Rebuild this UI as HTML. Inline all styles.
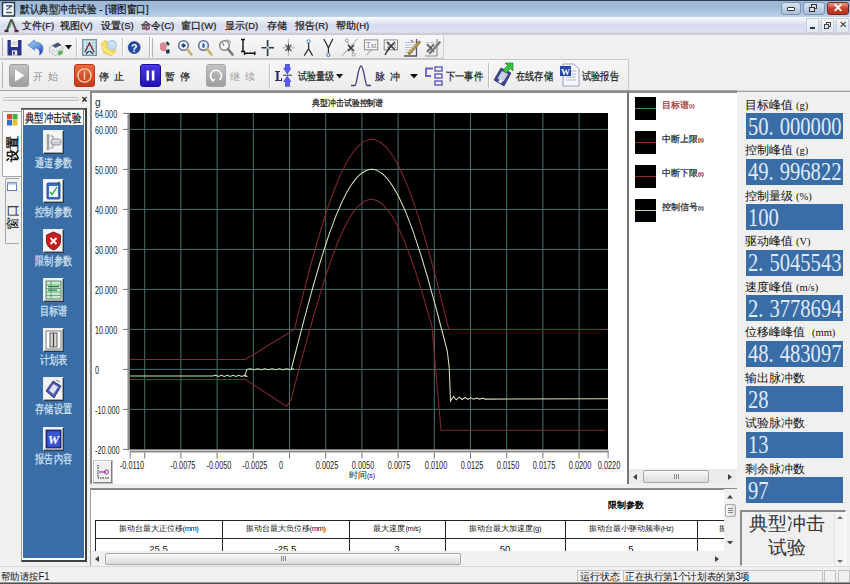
<!DOCTYPE html><html><head><meta charset="utf-8"><style>
*{margin:0;padding:0;box-sizing:border-box}
html,body{width:850px;height:584px;overflow:hidden;background:#f0f0f0;font-family:"Liberation Sans",sans-serif;color:#000}
.a{position:absolute}
.t{position:absolute;white-space:nowrap;line-height:1}
.b{-webkit-text-stroke:0.22px currentColor}
</style></head><body><div class="a" style="left:0;top:0;width:850px;height:17px;background:linear-gradient(#2c3e55 0,#2c3e55 1px,#a3b9d1 1px,#9cb8d8 6px,#b9d0e7 16px)"></div>
<svg class="a" style="left:1px;top:1px;" width="15" height="16" viewBox="0 0 15 16"><rect x="1.5" y="1.5" width="12" height="13.5" fill="#f8fcfc" stroke="#2a3a50" stroke-width="1.5"/><path d="M5,4.8 H11 M11,4.8 L5.5,8.8" stroke="#3a5a98" stroke-width="1.4" fill="none"/><path d="M8.5,8.3 H11" stroke="#d8c060" stroke-width="1.1"/><path d="M5,11.5 H11" stroke="#3a5a58" stroke-width="1.4"/></svg>
<div class="t b" style="left:20px;top:3.5px;font-size:11px;color:#101010;transform:scaleX(0.87);transform-origin:0 0">默认典型冲击试验 - [谱图窗口]</div>
<div class="a" style="left:781px;top:2px;width:20px;height:13px;border:1px solid #7d93b0;border-radius:3px;background:linear-gradient(#d6e2f0,#aac0da)"></div>
<div class="a" style="left:787px;top:7px;width:8px;height:4px;border:1px solid #333;border-radius:1px;background:#fff"></div>
<div class="a" style="left:803px;top:2px;width:22px;height:13px;border:1px solid #7d93b0;border-radius:3px;background:linear-gradient(#d6e2f0,#aac0da)"></div>
<div class="a" style="left:811px;top:4px;width:6px;height:5px;border:1px solid #333;background:#ddd"></div><div class="a" style="left:809px;top:7px;width:6px;height:5px;border:1px solid #333;background:#ddd"></div>
<div class="a" style="left:827px;top:2px;width:22px;height:13px;border:1px solid #6b2a22;border-radius:3px;background:linear-gradient(#e8a090,#c8402c 50%,#b8321e)"></div>
<div class="t" style="left:833px;top:2px;font-size:12px;font-weight:bold;color:#fff">✕</div>
<div class="a" style="left:0;top:17px;width:850px;height:18px;background:linear-gradient(#f8fcff 0,#e6ecf5 4px,#d8dcef 8px,#dde0f3 15px,#d0d3dc 16px,#c6c6c6 18px)"></div>
<svg class="a" style="left:3px;top:17px;" width="16" height="16" viewBox="0 0 16 16"><path d="M8.5,2.5 C7,5.5 5.5,9.5 4,13.3" stroke="#4a524a" stroke-width="2.2" fill="none"/><path d="M8.5,2.5 C10,5.5 11.5,9.5 13,13.3" stroke="#5a5454" stroke-width="2" fill="none"/><path d="M8,5.5 L6.5,10.5" stroke="#58b058" stroke-width="1.3"/><path d="M1.5,14 H5.5" stroke="#3a2a2a" stroke-width="2.2"/><path d="M11.5,14 H15.5" stroke="#6a1e30" stroke-width="2.4"/></svg>
<div class="t b" style="left:22px;top:21px;font-size:9.5px;color:#1a1a1a">文件(F)</div>
<div class="t b" style="left:60px;top:21px;font-size:9.5px;color:#1a1a1a">视图(V)</div>
<div class="t b" style="left:101px;top:21px;font-size:9.5px;color:#1a1a1a">设置(S)</div>
<div class="t b" style="left:141px;top:21px;font-size:9.5px;color:#1a1a1a">命令(C)</div>
<div class="t b" style="left:181px;top:21px;font-size:9.5px;color:#1a1a1a">窗口(W)</div>
<div class="t b" style="left:225px;top:21px;font-size:9.5px;color:#1a1a1a">显示(D)</div>
<div class="t b" style="left:267px;top:21px;font-size:9.5px;color:#1a1a1a">存储</div>
<div class="t b" style="left:295px;top:21px;font-size:9.5px;color:#1a1a1a">报告(R)</div>
<div class="t b" style="left:336px;top:21px;font-size:9.5px;color:#1a1a1a">帮助(H)</div>
<div class="a" style="left:806px;top:18px;width:13px;height:15px;border:1px solid #c8cdd8;background:linear-gradient(#f4f7fb,#dde6f2)"></div>
<div class="a" style="left:821px;top:18px;width:13px;height:15px;border:1px solid #c8cdd8;background:linear-gradient(#f4f7fb,#dde6f2)"></div>
<div class="a" style="left:836px;top:18px;width:13px;height:15px;border:1px solid #c8cdd8;background:linear-gradient(#f4f7fb,#dde6f2)"></div>
<div class="a" style="left:810px;top:27px;width:5px;height:2px;background:#333"></div>
<div class="a" style="left:826px;top:22px;width:5px;height:5px;border:1px solid #444"></div><div class="a" style="left:824px;top:24px;width:5px;height:5px;border:1px solid #444;background:#e8eef6"></div>
<div class="t" style="left:839px;top:20px;font-size:10px;color:#333">✕</div>
<div class="a" style="left:0;top:35px;width:850px;height:24px;background:#f0f0f0"></div>
<div class="a" style="left:0;top:35px;width:444px;height:24px;background:linear-gradient(#f8f8f8,#ececec);border-bottom:1px solid #c8c8c8;border-right:1px solid #d0d0d0"></div>
<div class="a" style="left:2px;top:38px;width:1px;height:18px;background:#b0b0b0"></div>
<div class="a" style="left:0;top:59px;width:629px;height:1px;background:#c8c8c8"></div>
<div class="a" style="left:0;top:60px;width:629px;height:31px;background:linear-gradient(#f6f6f6,#ececec);border-right:1px solid #c8c8c8"></div>
<div class="a" style="left:2px;top:62px;width:1px;height:26px;background:#b0b0b0"></div>
<div class="a" style="left:0;top:90px;width:737px;height:1px;background:#a0a0a0"></div><div class="a" style="left:737px;top:90px;width:113px;height:1px;background:#d4d4d4"></div>
<svg class="a" style="left:7px;top:39px;" width="15" height="17" viewBox="0 0 15 17"><path d="M0.5,1 H14.5 V16.5 H0.5 Z" fill="#2c3488"/><rect x="3.8" y="1" width="7.2" height="7" fill="#f6f6f6"/><rect x="4.5" y="2.8" width="5.8" height="0.9" fill="#b8b8b8"/><rect x="4.5" y="4.8" width="5.8" height="0.9" fill="#b8b8b8"/><rect x="5" y="11.4" width="5.2" height="5.1" fill="#f0f0f6"/><rect x="6" y="12.6" width="1.8" height="3" fill="#2c3488"/></svg>
<svg class="a" style="left:27px;top:39px;" width="17" height="17" viewBox="0 0 17 17"><defs><linearGradient id="ug" x1="0" y1="0" x2="0.6" y2="1"><stop offset="0" stop-color="#a8d0f4"/><stop offset="0.55" stop-color="#6aa0e0"/><stop offset="1" stop-color="#2848c0"/></linearGradient></defs><path d="M0.8,6 L7.5,0.8 L7.5,3 C12.5,2.6 16.3,5.5 16,10 C15.8,13 14,15.5 12.5,16.3 C13.2,13.5 12.8,9 7.5,9 L7.5,11.2 Z" fill="url(#ug)" stroke="#4a70b8" stroke-width="0.6"/></svg>
<svg class="a" style="left:48px;top:39px;" width="16" height="18" viewBox="0 0 16 18"><path d="M1.5,8 L9,4.5 L15,8 L15,12.5 L7.5,16.5 L1.5,12.5 Z" fill="#eceef2" stroke="#a0a4b0" stroke-width="0.7"/><path d="M4,6.5 L10,3.5 L13.5,6 L7.5,9 Z" fill="#4a5478"/><path d="M3,10 L7.5,12.5 L14,9" stroke="#b8bcc8" stroke-width="0.7" fill="none"/><path d="M9.5,13 L13.5,11 L15,14.5 L11,16.8 Z" fill="#58b050"/></svg>
<svg class="a" style="left:65px;top:45px;" width="7" height="5" viewBox="0 0 7 5"><path d="M0,0 H7 L3.5,4.5 Z" fill="#111"/></svg>
<div class="a" style="left:76px;top:38px;width:1px;height:19px;background:#c0c0c0;box-shadow:1px 0 #fff"></div>
<svg class="a" style="left:82px;top:39px;" width="15" height="17" viewBox="0 0 15 17"><rect x="0.6" y="0.6" width="13.8" height="15.8" fill="#a8d8d8" stroke="#7890a8" stroke-width="1.2"/><path d="M2.5,2.5 H12.5 M2.5,5.5 H12.5 M2.5,8.5 H12.5 M2.5,11.5 H12.5 M2.5,14.5 H12.5" stroke="#fff" stroke-width="1.3" stroke-dasharray="1.4,1.6"/><path d="M3,13 L7.5,4 L12,13" stroke="#8a2040" stroke-width="1.4" fill="none"/><path d="M4,15 L7,12 M11,15 L8,12" stroke="#203070" stroke-width="1.2"/></svg>
<svg class="a" style="left:100px;top:38px;" width="18" height="19" viewBox="0 0 18 19"><path d="M1,6 L5,2.5 L8,4 L16,12 L12,18 L4,15 Z" fill="#f4dc60" stroke="#d8b838" stroke-width="0.6"/><path d="M2,9 L13,17" stroke="#fff0a0" stroke-width="1.5"/><circle cx="12" cy="7" r="4.8" fill="#c0dcf0" stroke="#98b8d8" stroke-width="0.6"/><path d="M9,5 C11,6 13,5 15,7" stroke="#e8f4fc" stroke-width="1" fill="none"/></svg>
<div class="a" style="left:122px;top:38px;width:1px;height:19px;background:#c0c0c0;box-shadow:1px 0 #fff"></div>
<svg class="a" style="left:127px;top:40px;" width="15" height="16" viewBox="0 0 15 16"><circle cx="7.2" cy="7.6" r="7" fill="#e4ecf6"/><circle cx="7.2" cy="7.6" r="6" fill="#2448a0" stroke="#1a3480" stroke-width="0.6"/><text x="7.2" y="11.6" font-size="10.5" font-weight="bold" text-anchor="middle" fill="#fff" font-family="Liberation Sans">?</text></svg>
<div class="a" style="left:149px;top:37px;width:1px;height:21px;background:#b8b8b8;box-shadow:1px 0 #fff"></div>
<div class="a" style="left:152px;top:38px;width:1px;height:19px;background:#b0b0b0"></div>
<svg class="a" style="left:158px;top:40px;" width="14" height="15" viewBox="0 0 14 15"><path d="M2,4 C4,1 8,2 9,5 L8,11 C6,12 3,11 2,9 Z" fill="#d88a94"/><path d="M9,1 L12,4 L10,6 L8,3 Z M8,10 L11,9 L12,12 L10,14 L8,13 Z" fill="#1e4050"/></svg>
<svg class="a" style="left:177px;top:39px;" width="16" height="17" viewBox="0 0 16 17"><circle cx="6.5" cy="6.5" r="4.8" fill="#f0f6ff" stroke="#6474a4" stroke-width="1.6"/><path d="M6.5,4 L9,6.5 L6.5,9 L4,6.5 Z" fill="#24488c"/><path d="M10,10 L14.5,15.5" stroke="#c4b070" stroke-width="2.6" stroke-linecap="round"/></svg>
<svg class="a" style="left:197px;top:39px;" width="16" height="17" viewBox="0 0 16 17"><circle cx="6.5" cy="6.5" r="4.8" fill="#f0f6ff" stroke="#6474a4" stroke-width="1.6"/><ellipse cx="6.5" cy="6.5" rx="1.3" ry="2.6" fill="#3a68b0"/><path d="M10,10 L14.5,15.5" stroke="#c4b070" stroke-width="2.6" stroke-linecap="round"/></svg>
<svg class="a" style="left:218px;top:39px;" width="16" height="17" viewBox="0 0 16 17"><circle cx="6.5" cy="6.5" r="4.8" fill="#f8f8f8" stroke="#8a8a8a" stroke-width="1.6"/><path d="M4,3 L6,7" stroke="#8a8a8a" stroke-width="1.2"/><path d="M7,1.5 C10,0.5 13,2 12.5,4" stroke="#8a8a8a" stroke-width="1" fill="none"/><path d="M10,10 L14.5,15.5" stroke="#7a7a7a" stroke-width="2.6" stroke-linecap="round"/></svg>
<svg class="a" style="left:238px;top:37px;" width="18" height="20" viewBox="0 0 18 20"><path d="M3,2.5 H7 M5,2.5 V14.5 M3,14.5 H7" stroke="#111" stroke-width="1.4" fill="none"/><path d="M6.5,16.3 H16.8 M6.5,14.5 V18 M16.8,14.5 V18" stroke="#111" stroke-width="1.4" fill="none"/></svg>
<svg class="a" style="left:260px;top:39px;" width="16" height="18" viewBox="0 0 16 18"><path d="M7.6,1 V17 M1.5,8.8 H14" stroke="#2c363e" stroke-width="1.6"/><circle cx="7.6" cy="8.8" r="1.3" fill="#b8e0f0"/></svg>
<svg class="a" style="left:281px;top:38px;" width="15" height="19" viewBox="0 0 15 19"><path d="M7.4,1 V18 M1,9.8 H14" stroke="#a8a8a8" stroke-width="0.9"/><path d="M4.4,6.8 L10.4,12.8 M10.4,6.8 L4.4,12.8 M7.4,6 V13.5" stroke="#404040" stroke-width="1.2"/></svg>
<svg class="a" style="left:303px;top:38px;" width="11" height="19" viewBox="0 0 11 19"><circle cx="5.6" cy="3.4" r="1.6" fill="#fff" stroke="#3878b8" stroke-width="1"/><path d="M5.6,5 V10.8 L1.2,17.6 M5.6,10.8 L9.6,17.6" stroke="#2a2a2a" stroke-width="1.2" fill="none"/></svg>
<svg class="a" style="left:322px;top:37px;" width="12" height="20" viewBox="0 0 12 20"><path d="M1.9,1.9 L6.4,10.8 L10.8,1.9 M6.4,10.8 V16.3" stroke="#2a2a2a" stroke-width="1.2" fill="none"/><circle cx="6.4" cy="18" r="1.6" fill="#fff" stroke="#3878b8" stroke-width="1"/></svg>
<svg class="a" style="left:341px;top:37px;" width="18" height="20" viewBox="0 0 18 20"><path d="M1.2,18.7 L16.5,1.9" stroke="#9a9a9a" stroke-width="1" fill="none"/><path d="M5.7,3.5 L12.6,17.5" stroke="#9a9a9a" stroke-width="1" fill="none"/><circle cx="5.7" cy="3.5" r="1.5" fill="#fff" stroke="#8a8a8a" stroke-width="0.9"/><circle cx="12.6" cy="17.5" r="1.5" fill="#fff" stroke="#8a8a8a" stroke-width="0.9"/><path d="M7,8 L13,14 M13,8 L7,14" stroke="#3a3a3a" stroke-width="1.6"/></svg>
<svg class="a" style="left:363px;top:38px;" width="16" height="19" viewBox="0 0 16 19"><rect x="1.4" y="1.9" width="13.4" height="9.9" fill="#f6f6f6" stroke="#8a8a8a" stroke-width="1"/><text x="8.1" y="9.6" font-size="7.5" text-anchor="middle" fill="#707070" font-family="Liberation Serif">Txt</text><path d="M8.4,12 L3.4,17.2" stroke="#8a8a8a" stroke-width="1"/></svg>
<svg class="a" style="left:383px;top:38px;" width="16" height="19" viewBox="0 0 16 19"><rect x="1.2" y="1.9" width="13.3" height="9.9" fill="#f6f6f6" stroke="#8a8a8a" stroke-width="1"/><text x="8" y="9.6" font-size="7.5" text-anchor="middle" fill="#707070" font-family="Liberation Serif">Txt</text><path d="M4,4 L12,12 M12,4 L6,10 L2,17" stroke="#3a3a3a" stroke-width="1.4"/></svg>
<svg class="a" style="left:403px;top:38px;" width="18" height="19" viewBox="0 0 18 19"><path d="M2,4.5 H12 M2,7 H12 M2,9.5 H12 M2,12 H11 M2,14.5 H10" stroke="#a8b8c8" stroke-width="0.8"/><path d="M13.5,1 V18 M1,18 H14" stroke="#4a5868" stroke-width="1.3"/><path d="M8,2 L10,4" stroke="#a070a0" stroke-width="1.2"/><path d="M6.2,15.4 L16.2,4.2" stroke="#a08040" stroke-width="3" stroke-linecap="round"/><path d="M6.5,14.5 L15,5" stroke="#e0c080" stroke-width="0.8"/></svg>
<svg class="a" style="left:424px;top:38px;" width="17" height="19" viewBox="0 0 17 19"><path d="M2,4.5 H11 M2,8 H11 M2,12 H10" stroke="#c0c0c0" stroke-width="0.8"/><path d="M13,1 V18 M1,18 H13" stroke="#909090" stroke-width="1.2"/><path d="M3,6 L10,14 M10,6 L3,14" stroke="#555" stroke-width="1.5"/><path d="M6,15 L15.5,4.5" stroke="#7a7a7a" stroke-width="2.6" stroke-linecap="round"/></svg>
<svg class="a" style="left:9px;top:64px;" width="20" height="23" viewBox="0 0 20 23"><defs><linearGradient id="gg" x1="0" y1="0" x2="0" y2="1"><stop offset="0" stop-color="#c4c4c4"/><stop offset="1" stop-color="#9c9c9c"/></linearGradient></defs><rect x="0.5" y="0.5" width="19" height="22" rx="2.5" fill="url(#gg)" stroke="#a0a0a0"/><path d="M6,5.5 L15.5,11.5 L6,17.5 Z" fill="#fff"/></svg>
<div class="t" style="left:32.5px;top:71.8px;font-size:9.6px;color:#8c8c8c">开</div><div class="t" style="left:47.5px;top:71.8px;font-size:9.6px;color:#8c8c8c">始</div>
<svg class="a" style="left:74px;top:64px;" width="21" height="23" viewBox="0 0 21 23"><defs><linearGradient id="rg" x1="0" y1="0" x2="0" y2="1"><stop offset="0" stop-color="#f06a40"/><stop offset="1" stop-color="#c03a18"/></linearGradient></defs><rect x="0.5" y="0.5" width="20" height="22" rx="2.5" fill="url(#rg)" stroke="#b83818"/><circle cx="10.5" cy="11.5" r="6.6" fill="none" stroke="#f4d0b0" stroke-width="1.4"/><path d="M10.5,7.2 V15.8" stroke="#f4d0b0" stroke-width="1.5"/></svg>
<div class="t b" style="left:98.5px;top:71.8px;font-size:9.6px;color:#1a1a1a">停</div><div class="t b" style="left:113.5px;top:71.8px;font-size:9.6px;color:#1a1a1a">止</div>
<svg class="a" style="left:140px;top:64px;" width="21" height="23" viewBox="0 0 21 23"><defs><linearGradient id="bg" x1="0" y1="0" x2="0" y2="1"><stop offset="0" stop-color="#4a3ae8"/><stop offset="1" stop-color="#2010b0"/></linearGradient></defs><rect x="0.5" y="0.5" width="20" height="22" rx="2.5" fill="url(#bg)" stroke="#1a10a0"/><rect x="6.5" y="6.5" width="2.6" height="10" fill="#fff"/><rect x="11.8" y="6.5" width="2.6" height="10" fill="#fff"/></svg>
<div class="t b" style="left:164.5px;top:71.8px;font-size:9.6px;color:#1a1a1a">暂</div><div class="t b" style="left:179.5px;top:71.8px;font-size:9.6px;color:#1a1a1a">停</div>
<svg class="a" style="left:206px;top:64px;" width="20" height="23" viewBox="0 0 20 23"><rect x="0.5" y="0.5" width="19" height="22" rx="2.5" fill="url(#gg)" stroke="#a8a8a8"/><path d="M6.5,16 A5.5,5.5 0 1 1 13.5,16" fill="none" stroke="#fff" stroke-width="1.6"/><path d="M5,14 L6.5,17 L9,15" fill="none" stroke="#fff" stroke-width="1.2"/></svg>
<div class="t" style="left:229.5px;top:71.8px;font-size:9.6px;color:#a0a0a0">继</div><div class="t" style="left:244.5px;top:71.8px;font-size:9.6px;color:#a0a0a0">续</div>
<div class="a" style="left:269px;top:63px;width:1px;height:25px;background:#c0c0c0;box-shadow:1px 0 #fff"></div>
<svg class="a" style="left:274px;top:63px;" width="20" height="24" viewBox="0 0 20 24"><path d="M1,8 H6 V9 H4.6 V17 H7 V15 H8 V18 H1 V17 H2.4 V9 H1 Z" fill="#303060"/><path d="M11,1 H16 V4.7 H17.6 L13.3,11.8 L9,4.7 H11 Z M11,23.7 H16 V19 H17.6 L13.3,12.6 L9,19 H11 Z" fill="#5858e8"/><path d="M9,12.2 H18" stroke="#303050" stroke-width="1"/></svg>
<div class="t b" style="left:297.5px;top:70.5px;font-size:10.5px;color:#1a1a1a;transform:scaleX(0.82);transform-origin:0 0">试验量级</div>
<svg class="a" style="left:336px;top:74px;" width="7" height="5" viewBox="0 0 7 5"><path d="M0,0 H7 L3.5,4.5 Z" fill="#111"/></svg>
<svg class="a" style="left:350px;top:64px;" width="22" height="23" viewBox="0 0 22 23"><path d="M1,21.5 H5 C7,21 8,2 11,2 C14,2 15,21 17,21.5 H21" fill="none" stroke="#404080" stroke-width="1.3"/></svg>
<div class="t b" style="left:374.5px;top:71.8px;font-size:9.6px;color:#1a1a1a">脉</div><div class="t b" style="left:389.5px;top:71.8px;font-size:9.6px;color:#1a1a1a">冲</div>
<svg class="a" style="left:410px;top:74px;" width="8" height="5" viewBox="0 0 8 5"><path d="M0,0 H8 L4,4.5 Z" fill="#111"/></svg>
<svg class="a" style="left:424px;top:65px;" width="20" height="21" viewBox="0 0 20 21"><path d="M9,3.5 H2 V11 H7" fill="none" stroke="#6464c4" stroke-width="1.8"/><rect x="11" y="2" width="7" height="4" fill="none" stroke="#6464c4" stroke-width="1.5"/><rect x="11" y="9" width="7" height="4" fill="none" stroke="#6464c4" stroke-width="1.5"/><rect x="11" y="16" width="7" height="4" fill="none" stroke="#6464c4" stroke-width="1.5"/></svg>
<div class="t b" style="left:445.5px;top:70.5px;font-size:10.5px;color:#1a1a1a;transform:scaleX(0.84);transform-origin:0 0">下一事件</div>
<div class="a" style="left:488px;top:63px;width:1px;height:25px;background:#c0c0c0;box-shadow:1px 0 #fff"></div>
<svg class="a" style="left:493px;top:62px;" width="21" height="25" viewBox="0 0 21 25"><path d="M1,18 L8,6 L18,11 L11,24 Z" fill="#40448c" stroke="#202460" stroke-width="0.7"/><path d="M4.5,16.5 L9,9 L15,12 L10.5,19.5 Z" fill="#c8d0e8"/><path d="M5,20 L7,17 L10,18.5 L8,21.5 Z" fill="#e8ecf4"/><path d="M12,1 L20,1 L20,9 L17.5,6.5 L13,11 L10,8 L14.5,3.5 Z" fill="#38c040" stroke="#1a8020" stroke-width="0.6"/></svg>
<div class="t b" style="left:515.5px;top:70.5px;font-size:10.5px;color:#1a1a1a;transform:scaleX(0.84);transform-origin:0 0">在线存储</div>
<svg class="a" style="left:559px;top:63px;" width="21" height="24" viewBox="0 0 21 24"><path d="M4,1 H15 L20,6 V23 H4 Z" fill="#f4f6fa" stroke="#8090b0" stroke-width="0.8"/><path d="M7,8 H17 M7,11 H17 M7,14 H17 M7,17 H17" stroke="#a0b0c8" stroke-width="0.8"/><rect x="1" y="3" width="11" height="10" fill="#2848a8"/><text x="6.5" y="11.5" font-size="9" font-weight="bold" text-anchor="middle" fill="#fff" font-family="Liberation Serif">W</text></svg>
<div class="t b" style="left:581.5px;top:70.5px;font-size:10.5px;color:#1a1a1a;transform:scaleX(0.84);transform-origin:0 0">试验报告</div>
<div class="a" style="left:0;top:91px;width:89px;height:476px;background:#f0f0f0"></div>
<div class="a" style="left:2.5px;top:96.5px;width:76px;height:4.5px;border:1px solid #c4c4c4;border-radius:1.5px;background:linear-gradient(#fafafa,#dcdcdc)"></div>
<div class="t" style="left:81.5px;top:94.5px;font-size:10px;font-weight:bold;color:#111">×</div>
<div class="a" style="left:2px;top:111px;width:20px;height:66px;border:1px solid #a8a8a8;border-right:none;border-radius:2px 0 0 2px;background:#fbfbfb"></div>
<svg class="a" style="left:7px;top:114px;" width="11" height="12" viewBox="0 0 11 12"><rect x="0" y="0" width="5" height="5.5" fill="#e04830"/><rect x="5.5" y="0" width="5" height="5.5" fill="#40b040"/><rect x="0" y="6" width="5" height="5.5" fill="#3870d0"/><rect x="5.5" y="6" width="5" height="5.5" fill="#e8c030"/></svg>
<div class="t" style="left:-1px;top:142px;width:26px;height:13px;text-align:center;font-size:13px;font-weight:bold;color:#111;transform:rotate(-90deg)">设置</div>
<div class="a" style="left:5px;top:178px;width:14px;height:66px;border:1px solid #a8a8a8;border-right:none;border-radius:2px 0 0 2px;background:#f0f0f0"></div>
<svg class="a" style="left:7px;top:182px;" width="10" height="9" viewBox="0 0 10 9"><rect x="0.5" y="0.5" width="9" height="8" fill="#fff" stroke="#6080b0"/><rect x="0.5" y="0.5" width="9" height="2" fill="#a0c0e8"/></svg>
<div class="t" style="left:-1px;top:210px;width:26px;height:13px;text-align:center;font-size:13px;color:#111;transform:rotate(-90deg)">窗口</div>
<div class="a" style="left:21px;top:108px;width:66px;height:454px;border:1px solid #9a9a9a;border-top:2px solid #505050;border-right:2px solid #404040;border-bottom:2px solid #404040;background:#fff"></div>
<div class="a" style="left:23px;top:109px;width:61px;height:17px;background:#fff;border:1px solid #808080"></div>
<div class="t b" style="left:25px;top:111.5px;font-size:12px;color:#111;transform:scaleX(0.78);transform-origin:0 0">典型冲击试验</div>
<div class="a" style="left:23px;top:125px;width:61px;height:433px;background:#3a6ca6"></div>
<div class="a" style="left:42.5px;top:129.5px;width:21px;height:24px;background:#f4f4f4;border:1px solid #e8eef8;border-right:1px solid #303840;border-bottom:1px solid #303840;box-shadow:inset -1px -1px #9aa"></div>
<svg class="a" style="left:43px;top:129.5px;" width="21" height="24" viewBox="0 0 21 24"><rect x="3" y="3" width="15" height="18" fill="#f4f4f4"/><path d="M5,4 V20" stroke="#9aa0a8" stroke-width="2.5"/><path d="M7,6 H10 V9 M7,18 H10 V15" stroke="#8a9098" stroke-width="1" fill="none"/><rect x="8" y="9" width="10" height="6" rx="2.5" fill="#c8ccd4" stroke="#808890" stroke-width="0.8"/><path d="M9,10.5 H17" stroke="#eef0f4" stroke-width="1"/></svg>
<div class="t b" style="left:23px;top:156.6px;width:61px;text-align:center;font-size:12px;color:#d4e6f4;transform:scaleX(0.77);transform-origin:50% 0">通道参数</div>
<div class="a" style="left:42.5px;top:179.0px;width:21px;height:24px;background:#f4f4f4;border:1px solid #e8eef8;border-right:1px solid #303840;border-bottom:1px solid #303840;box-shadow:inset -1px -1px #9aa"></div>
<svg class="a" style="left:43px;top:179.0px;" width="21" height="24" viewBox="0 0 21 24"><rect x="4" y="4" width="13" height="16" rx="1" fill="#3a70c8" stroke="#1a3a88" stroke-width="0.8"/><rect x="6" y="7" width="9" height="11" fill="#e8f4ff"/><path d="M7,13 L9,15.5 L14,8" stroke="#2a9a40" stroke-width="1.3" fill="none"/><path d="M13,5 L17,3" stroke="#505050" stroke-width="1.2"/></svg>
<div class="t b" style="left:23px;top:205.9px;width:61px;text-align:center;font-size:12px;color:#d4e6f4;transform:scaleX(0.77);transform-origin:50% 0">控制参数</div>
<div class="a" style="left:42.5px;top:228.5px;width:21px;height:24px;background:#f4f4f4;border:1px solid #e8eef8;border-right:1px solid #303840;border-bottom:1px solid #303840;box-shadow:inset -1px -1px #9aa"></div>
<svg class="a" style="left:43px;top:228.5px;" width="21" height="24" viewBox="0 0 21 24"><path d="M10.5,3 L17.5,6 V12 C17.5,17 14,19.5 10.5,21 C7,19.5 3.5,17 3.5,12 V6 Z" fill="#c81e1e" stroke="#6a0e0e" stroke-width="0.8"/><path d="M7.5,9 L13.5,15 M13.5,9 L7.5,15" stroke="#fff" stroke-width="2"/></svg>
<div class="t b" style="left:23px;top:255.3px;width:61px;text-align:center;font-size:12px;color:#d4e6f4;transform:scaleX(0.77);transform-origin:50% 0">限制参数</div>
<div class="a" style="left:42.5px;top:278.0px;width:21px;height:24px;background:#f4f4f4;border:1px solid #e8eef8;border-right:1px solid #303840;border-bottom:1px solid #303840;box-shadow:inset -1px -1px #9aa"></div>
<svg class="a" style="left:43px;top:278.0px;" width="21" height="24" viewBox="0 0 21 24"><rect x="3" y="3" width="15" height="18" fill="#c8ecd0" stroke="#3a6a50" stroke-width="0.8"/><path d="M3,7 H18 M3,10.5 H18 M3,14 H18 M3,17.5 H18 M8,3 V21" stroke="#4a8a60" stroke-width="0.7"/><path d="M5,8.7 H16 M5,12.2 H14" stroke="#208040" stroke-width="1.3"/></svg>
<div class="t b" style="left:23px;top:304.6px;width:61px;text-align:center;font-size:12px;color:#d4e6f4;transform:scaleX(0.77);transform-origin:50% 0">目标谱</div>
<div class="a" style="left:42.5px;top:327.5px;width:21px;height:24px;background:#f4f4f4;border:1px solid #e8eef8;border-right:1px solid #303840;border-bottom:1px solid #303840;box-shadow:inset -1px -1px #9aa"></div>
<svg class="a" style="left:43px;top:327.5px;" width="21" height="24" viewBox="0 0 21 24"><rect x="3" y="3" width="15" height="18" fill="#fafafa" stroke="#606060" stroke-width="0.8"/><rect x="7" y="5" width="7" height="14" fill="#d8d8d8" stroke="#404040" stroke-width="0.8"/><path d="M10.5,5 V19" stroke="#404040" stroke-width="1.2"/></svg>
<div class="t b" style="left:23px;top:354.0px;width:61px;text-align:center;font-size:12px;color:#d4e6f4;transform:scaleX(0.77);transform-origin:50% 0">计划表</div>
<div class="a" style="left:42.5px;top:377.0px;width:21px;height:24px;background:#f4f4f4;border:1px solid #e8eef8;border-right:1px solid #303840;border-bottom:1px solid #303840;box-shadow:inset -1px -1px #9aa"></div>
<svg class="a" style="left:43px;top:377.0px;" width="21" height="24" viewBox="0 0 21 24"><path d="M3,14 L10,4 L18,9 L11,21 Z" fill="#5058b0" stroke="#202868" stroke-width="0.8"/><path d="M6,13.5 L10.5,7 L15,10 L10.5,17 Z" fill="#e0e4f4"/><path d="M13,3 L17,5" stroke="#808080"/></svg>
<div class="t b" style="left:23px;top:403.3px;width:61px;text-align:center;font-size:12px;color:#d4e6f4;transform:scaleX(0.77);transform-origin:50% 0">存储设置</div>
<div class="a" style="left:42.5px;top:426.5px;width:21px;height:24px;background:#f4f4f4;border:1px solid #e8eef8;border-right:1px solid #303840;border-bottom:1px solid #303840;box-shadow:inset -1px -1px #9aa"></div>
<svg class="a" style="left:43px;top:426.5px;" width="21" height="24" viewBox="0 0 21 24"><rect x="3" y="3" width="15" height="18" fill="#2838b0" stroke="#101868" stroke-width="0.8"/><rect x="4.5" y="4.5" width="12" height="15" fill="#3a58d0"/><text x="10.5" y="17" font-size="13" font-weight="bold" font-style="italic" text-anchor="middle" fill="#fff" font-family="Liberation Serif">W</text></svg>
<div class="t b" style="left:23px;top:452.7px;width:61px;text-align:center;font-size:12px;color:#d4e6f4;transform:scaleX(0.77);transform-origin:50% 0">报告内容</div>
<div class="a" style="left:90px;top:91px;width:538px;height:393px;background:#fff;border-left:2px solid #8c8c8c;border-top:2px solid #8c8c8c"></div>
<div class="t" style="left:95px;top:98px;font-size:10px;color:#222">g</div>
<div class="t b" style="left:312px;top:97.5px;font-size:9.4px;color:#111;transform:scaleX(0.88);transform-origin:0 0">典型冲击试验控制谱</div>
<svg class="a" style="left:0;top:0" width="850" height="584" viewBox="0 0 850 584"><rect x="129.5" y="113" width="478.5" height="336.5" fill="#000"/><path d="M129.5,129.4 H608 M129.5,169.4 H608 M129.5,209.4 H608 M129.5,249.4 H608 M129.5,289.4 H608 M129.5,329.4 H608 M129.5,369.4 H608 M129.5,409.4 H608 M144.7,113 V449.5 M180.9,113 V449.5 M217.1,113 V449.5 M253.3,113 V449.5 M289.5,113 V449.5 M325.7,113 V449.5 M361.9,113 V449.5 M398.1,113 V449.5 M434.3,113 V449.5 M470.5,113 V449.5 M506.7,113 V449.5 M542.9,113 V449.5 M579.1,113 V449.5" stroke="#46716f" stroke-width="1" fill="none"/><path d="M128.2,113 V450.5" stroke="#8a8a8a" stroke-width="1.5" fill="none"/><path d="M129.5,451.5 H609" stroke="#8a8a8a" stroke-width="2" fill="none"/><path d="M123,113.4 H128.5 M123,129.4 H128.5 M123,169.4 H128.5 M123,209.4 H128.5 M123,249.4 H128.5 M123,289.4 H128.5 M123,329.4 H128.5 M123,369.4 H128.5 M123,409.4 H128.5 M123,449.4 H128.5 M130.2,452.5 V458.5 M144.7,452.5 V458.5 M180.9,452.5 V458.5 M217.1,452.5 V458.5 M253.3,452.5 V458.5 M289.5,452.5 V458.5 M325.7,452.5 V458.5 M361.9,452.5 V458.5 M398.1,452.5 V458.5 M434.3,452.5 V458.5 M470.5,452.5 V458.5 M506.7,452.5 V458.5 M542.9,452.5 V458.5 M579.1,452.5 V458.5 M608.1,452.5 V458.5" stroke="#777" stroke-width="1" fill="none"/><path d="M130.2,359.4 L245.3,359.4 L294.4,329.4 L297.0,318.9 L299.5,308.5 L302.1,298.3 L304.7,288.2 L307.3,278.2 L309.8,268.5 L312.4,259.0 L315.0,249.8 L317.6,240.8 L320.1,232.0 L322.7,223.6 L325.3,215.5 L327.8,207.7 L330.4,200.3 L333.0,193.2 L335.6,186.5 L338.1,180.2 L340.7,174.4 L343.3,168.9 L345.9,163.9 L348.4,159.3 L351.0,155.2 L353.6,151.5 L356.1,148.3 L358.7,145.6 L361.3,143.4 L363.9,141.6 L366.4,140.4 L369.0,139.7 L371.6,139.4 L374.2,139.6 L376.7,140.4 L379.3,141.6 L381.9,143.4 L384.5,145.6 L387.0,148.3 L389.6,151.5 L392.2,155.1 L394.7,159.2 L397.3,163.8 L399.9,168.8 L402.5,174.3 L405.0,180.2 L407.6,186.4 L410.2,193.1 L412.8,200.2 L415.3,207.6 L417.9,215.4 L420.5,223.5 L423.0,231.9 L425.6,240.7 L428.2,249.7 L430.8,258.9 L433.3,268.4 L435.9,278.1 L438.5,288.1 L441.1,298.1 L443.6,308.4 L446.2,318.8 L448.8,329.4 L605.2,329.4" stroke="#82282e" stroke-width="1.05" fill="none"/><path d="M130.2,379.4 L245.3,379.4 L286.5,406.4 L291.2,399.6 L298.9,369.4 L301.1,361.2 L303.3,353.1 L305.6,344.9 L307.8,336.9 L310.0,328.9 L312.2,321.0 L314.4,313.2 L316.7,305.6 L318.9,298.1 L321.1,290.7 L323.3,283.6 L325.5,276.6 L327.7,269.9 L330.0,263.3 L332.2,257.1 L334.4,251.1 L336.6,245.3 L338.8,239.9 L341.1,234.7 L343.3,229.9 L345.5,225.4 L347.7,221.2 L349.9,217.4 L352.1,213.9 L354.4,210.8 L356.6,208.0 L358.8,205.6 L361.0,203.6 L363.2,202.0 L365.4,200.8 L367.7,199.9 L369.9,199.5 L372.1,199.4 L374.3,199.8 L376.5,200.5 L378.8,201.6 L381.0,203.1 L383.2,205.0 L385.4,207.3 L387.6,209.9 L389.8,213.0 L392.1,216.3 L394.3,220.1 L396.5,224.2 L398.7,228.6 L400.9,233.3 L403.2,238.4 L405.4,243.7 L407.6,249.4 L409.8,255.3 L412.0,261.5 L414.2,268.0 L416.5,274.6 L418.7,281.5 L420.9,288.6 L423.1,295.9 L425.3,303.4 L427.5,311.0 L429.8,318.7 L432.0,326.6 L441.0,430.2 L605.2,430.2" stroke="#82282e" stroke-width="1.05" fill="none"/><path d="M130.2,376.0 L212.8,376.0 L215.7,375.3 L218.5,376.5 L221.4,375.3 L224.3,376.5 L227.2,375.3 L230.1,376.5 L233.0,375.3 L235.9,376.5 L238.8,375.3 L241.7,376.5 L244.6,375.3 L247.5,376.5 L244.8,376.0 L246.8,369.4 L250.4,368.8 L254.0,369.8 L257.6,368.8 L261.3,369.8 L264.9,368.8 L268.5,369.8 L272.1,368.8 L275.7,369.8 L279.4,368.8 L283.0,369.8 L286.6,368.8 L290.2,369.8 L293.8,368.8 L291.2,369.4 L293.5,360.7 L295.7,352.0 L297.9,343.3 L300.2,334.7 L302.4,326.2 L304.6,317.7 L306.8,309.3 L309.1,301.1 L311.3,292.9 L313.5,285.0 L315.8,277.1 L318.0,269.5 L320.2,262.0 L322.5,254.8 L324.7,247.8 L326.9,241.0 L329.1,234.4 L331.4,228.1 L333.6,222.1 L335.8,216.3 L338.1,210.9 L340.3,205.7 L342.5,200.8 L344.8,196.3 L347.0,192.1 L349.2,188.2 L351.4,184.7 L353.7,181.6 L355.9,178.7 L358.1,176.3 L360.4,174.2 L362.6,172.5 L364.8,171.2 L367.1,170.2 L369.3,169.6 L371.5,169.4 L373.7,169.6 L376.0,170.1 L378.2,171.1 L380.4,172.4 L382.7,174.1 L384.9,176.1 L387.1,178.5 L389.4,181.3 L391.6,184.5 L393.8,188.0 L396.0,191.8 L398.3,196.0 L400.5,200.5 L402.7,205.3 L405.0,210.4 L407.2,215.9 L409.4,221.6 L411.7,227.6 L413.9,233.9 L416.1,240.4 L418.3,247.2 L420.6,254.2 L422.8,261.5 L425.0,268.9 L427.3,276.5 L429.5,284.3 L431.7,292.3 L434.0,300.4 L436.2,308.7 L438.4,317.0 L440.6,325.5 L442.9,334.0 L445.1,342.6 L447.3,351.3 L449.2,367.4 L450.5,401.0 L453.4,396.6 L456.3,399.8 L459.2,397.1 L462.1,399.5 L465.0,397.5 L467.9,399.4 L470.8,397.8 L473.7,399.2 L476.6,398.0 L479.5,399.1 L482.4,398.2 L485.3,399.1 L608.1,398.8" stroke="#d2e2b8" stroke-width="1.05" fill="none"/></svg>
<div class="t" style="left:95px;top:109.4px;font-size:10.5px;color:#222;transform:scaleX(0.69);transform-origin:0 0">64.000</div>
<div class="t" style="left:95px;top:125.4px;font-size:10.5px;color:#222;transform:scaleX(0.69);transform-origin:0 0">60.000</div>
<div class="t" style="left:95px;top:165.4px;font-size:10.5px;color:#222;transform:scaleX(0.69);transform-origin:0 0">50.000</div>
<div class="t" style="left:95px;top:205.4px;font-size:10.5px;color:#222;transform:scaleX(0.69);transform-origin:0 0">40.000</div>
<div class="t" style="left:95px;top:245.4px;font-size:10.5px;color:#222;transform:scaleX(0.69);transform-origin:0 0">30.000</div>
<div class="t" style="left:95px;top:285.4px;font-size:10.5px;color:#222;transform:scaleX(0.69);transform-origin:0 0">20.000</div>
<div class="t" style="left:95px;top:325.4px;font-size:10.5px;color:#222;transform:scaleX(0.69);transform-origin:0 0">10.000</div>
<div class="t" style="left:95px;top:365.4px;font-size:10.5px;color:#222;transform:scaleX(0.69);transform-origin:0 0">0</div>
<div class="t" style="left:95px;top:405.4px;font-size:10.5px;color:#222;transform:scaleX(0.69);transform-origin:0 0">-10.000</div>
<div class="t" style="left:95px;top:445.4px;font-size:10.5px;color:#222;transform:scaleX(0.69);transform-origin:0 0">-20.000</div>
<div class="t" style="left:92px;top:459.8px;width:80px;text-align:center;font-size:10.5px;color:#222;transform:scaleX(0.7)">-0.0110</div>
<div class="t" style="left:143px;top:459.8px;width:80px;text-align:center;font-size:10.5px;color:#222;transform:scaleX(0.7)">-0.0075</div>
<div class="t" style="left:178.5px;top:459.8px;width:80px;text-align:center;font-size:10.5px;color:#222;transform:scaleX(0.7)">-0.0050</div>
<div class="t" style="left:215px;top:459.8px;width:80px;text-align:center;font-size:10.5px;color:#222;transform:scaleX(0.7)">-0.0025</div>
<div class="t" style="left:241px;top:459.8px;width:80px;text-align:center;font-size:10.5px;color:#222;transform:scaleX(0.7)">0</div>
<div class="t" style="left:287px;top:459.8px;width:80px;text-align:center;font-size:10.5px;color:#222;transform:scaleX(0.7)">0.0025</div>
<div class="t" style="left:323px;top:459.8px;width:80px;text-align:center;font-size:10.5px;color:#222;transform:scaleX(0.7)">0.0050</div>
<div class="t" style="left:359px;top:459.8px;width:80px;text-align:center;font-size:10.5px;color:#222;transform:scaleX(0.7)">0.0075</div>
<div class="t" style="left:395.5px;top:459.8px;width:80px;text-align:center;font-size:10.5px;color:#222;transform:scaleX(0.7)">0.0100</div>
<div class="t" style="left:431.5px;top:459.8px;width:80px;text-align:center;font-size:10.5px;color:#222;transform:scaleX(0.7)">0.0125</div>
<div class="t" style="left:467.5px;top:459.8px;width:80px;text-align:center;font-size:10.5px;color:#222;transform:scaleX(0.7)">0.0150</div>
<div class="t" style="left:504px;top:459.8px;width:80px;text-align:center;font-size:10.5px;color:#222;transform:scaleX(0.7)">0.0175</div>
<div class="t" style="left:540px;top:459.8px;width:80px;text-align:center;font-size:10.5px;color:#222;transform:scaleX(0.7)">0.0200</div>
<div class="t" style="left:569px;top:459.8px;width:80px;text-align:center;font-size:10.5px;color:#222;transform:scaleX(0.7)">0.0220</div>
<div class="t" style="left:349px;top:471px;font-size:9px;color:#222">时间<span style="font-size:7px">(s)</span></div>
<div class="a" style="left:93px;top:460px;width:20px;height:24px;border:1px solid #c0c0c0;background:#f0f0f0;box-shadow:inset -1px -1px #808080, inset 1px 1px #fff"></div>
<svg class="a" style="left:96px;top:464px;" width="14" height="16" viewBox="0 0 14 16"><path d="M2,1 V14 H13" stroke="#222" stroke-width="1" fill="none" stroke-dasharray="1.5,1"/><path d="M3,8 H10" stroke="#a030a0" stroke-width="1.2"/><circle cx="10.5" cy="8" r="2" fill="none" stroke="#a030a0"/></svg>
<div class="a" style="left:627px;top:91px;width:110px;height:393px;background:#fff;border-left:2px solid #767676;border-top:2px solid #8c8c8c"></div>
<div class="a" style="left:635px;top:97px;width:21px;height:23px;background:#000"></div>
<div class="a" style="left:635px;top:108px;width:21px;height:1px;background:#3a9a3a"></div>
<div class="t b" style="left:662px;top:101px;font-size:9px;color:#a03030">目标谱<span style="font-size:6px">(t)</span></div>
<div class="a" style="left:635px;top:131px;width:21px;height:23px;background:#000"></div>
<div class="a" style="left:635px;top:142px;width:21px;height:1px;background:#902828"></div>
<div class="t b" style="left:662px;top:135px;font-size:9px;color:#222">中断上限<span style="font-size:6px">(t)</span></div>
<div class="a" style="left:635px;top:165px;width:21px;height:23px;background:#000"></div>
<div class="a" style="left:635px;top:176px;width:21px;height:1px;background:#902828"></div>
<div class="t b" style="left:662px;top:169px;font-size:9px;color:#222">中断下限<span style="font-size:6px">(t)</span></div>
<div class="a" style="left:635px;top:199px;width:21px;height:23px;background:#000"></div>
<div class="a" style="left:635px;top:210px;width:21px;height:1px;background:#c8d0a0"></div>
<div class="t b" style="left:662px;top:203px;font-size:9px;color:#222">控制信号<span style="font-size:6px">(t)</span></div>
<div class="a" style="left:629px;top:469px;width:108px;height:15px;background:#ececec"></div>
<svg class="a" style="left:633px;top:474px;" width="4" height="6" viewBox="0 0 4 6"><path d="M4,0 L0,3.0 L4,6 Z" fill="#404040"/></svg>
<div class="a" style="left:643px;top:470px;width:66px;height:13px;border:1px solid #a8a8a8;border-radius:2px;background:linear-gradient(#f8f8f8,#dcdcdc)"></div>
<div class="a" style="left:674px;top:474px;width:5px;height:5px;border-left:1px solid #888;border-right:1px solid #888"></div><div class="a" style="left:676px;top:474px;width:1px;height:5px;background:#888"></div>
<svg class="a" style="left:728px;top:474px;" width="4" height="6" viewBox="0 0 4 6"><path d="M0,0 L4,3.0 L0,6 Z" fill="#404040"/></svg>
<div class="a" style="left:737px;top:91px;width:113px;height:476px;background:#f0f0f0;border-top:1px solid #a0a0a0"></div>
<div class="t" style="left:745px;top:98.5px;font-size:12px;color:#111;font-family:'Liberation Serif',serif">目标峰值<span style="font-family:'Liberation Serif',serif;font-size:10.5px;margin-left:3px">(g)</span></div>
<div class="a" style="left:746px;top:113.3px;width:97px;height:26px;background:#3a6ca6"></div>
<div class="t" style="left:748px;top:114.7px;font-size:24.4px;color:#dfeaf6;-webkit-text-stroke:0;font-family:'Liberation Serif',serif;transform:scaleX(0.845);transform-origin:0 0">50<span style="letter-spacing:7px">.</span>000000</div>
<div class="t" style="left:745px;top:144.0px;font-size:12px;color:#111;font-family:'Liberation Serif',serif">控制峰值<span style="font-family:'Liberation Serif',serif;font-size:10.5px;margin-left:3px">(g)</span></div>
<div class="a" style="left:746px;top:158.8px;width:97px;height:26px;background:#3a6ca6"></div>
<div class="t" style="left:748px;top:160.2px;font-size:24.4px;color:#dfeaf6;-webkit-text-stroke:0;font-family:'Liberation Serif',serif;transform:scaleX(0.845);transform-origin:0 0">49<span style="letter-spacing:7px">.</span>996822</div>
<div class="t" style="left:745px;top:189.5px;font-size:12px;color:#111;font-family:'Liberation Serif',serif">控制量级<span style="font-family:'Liberation Serif',serif;font-size:10.5px;margin-left:3px">(%)</span></div>
<div class="a" style="left:746px;top:204.3px;width:97px;height:26px;background:#3a6ca6"></div>
<div class="t" style="left:748px;top:205.7px;font-size:24.4px;color:#dfeaf6;-webkit-text-stroke:0;font-family:'Liberation Serif',serif;transform:scaleX(0.845);transform-origin:0 0">100</div>
<div class="t" style="left:745px;top:235.0px;font-size:12px;color:#111;font-family:'Liberation Serif',serif">驱动峰值<span style="font-family:'Liberation Serif',serif;font-size:10.5px;margin-left:3px">(V)</span></div>
<div class="a" style="left:746px;top:249.8px;width:97px;height:26px;background:#3a6ca6"></div>
<div class="t" style="left:748px;top:251.2px;font-size:24.4px;color:#dfeaf6;-webkit-text-stroke:0;font-family:'Liberation Serif',serif;transform:scaleX(0.845);transform-origin:0 0">2<span style="letter-spacing:7px">.</span>5045543</div>
<div class="t" style="left:745px;top:280.5px;font-size:12px;color:#111;font-family:'Liberation Serif',serif">速度峰值<span style="font-family:'Liberation Serif',serif;font-size:10.5px;margin-left:3px">(m/s)</span></div>
<div class="a" style="left:746px;top:295.3px;width:97px;height:26px;background:#3a6ca6"></div>
<div class="t" style="left:748px;top:296.7px;font-size:24.4px;color:#dfeaf6;-webkit-text-stroke:0;font-family:'Liberation Serif',serif;transform:scaleX(0.845);transform-origin:0 0">2<span style="letter-spacing:7px">.</span>3778694</div>
<div class="t" style="left:745px;top:326.0px;font-size:12px;color:#111;font-family:'Liberation Serif',serif">位移峰峰值<span style="font-family:'Liberation Serif',serif;font-size:10.5px;margin-left:7px">(mm)</span></div>
<div class="a" style="left:746px;top:340.8px;width:97px;height:26px;background:#3a6ca6"></div>
<div class="t" style="left:748px;top:342.2px;font-size:24.4px;color:#dfeaf6;-webkit-text-stroke:0;font-family:'Liberation Serif',serif;transform:scaleX(0.845);transform-origin:0 0">48<span style="letter-spacing:7px">.</span>483097</div>
<div class="t" style="left:745px;top:371.5px;font-size:12px;color:#111;font-family:'Liberation Serif',serif">输出脉冲数<span style="font-family:'Liberation Serif',serif;font-size:10.5px;margin-left:3px"></span></div>
<div class="a" style="left:746px;top:386.3px;width:97px;height:26px;background:#3a6ca6"></div>
<div class="t" style="left:748px;top:387.7px;font-size:24.4px;color:#dfeaf6;-webkit-text-stroke:0;font-family:'Liberation Serif',serif;transform:scaleX(0.845);transform-origin:0 0">28</div>
<div class="t" style="left:745px;top:417.0px;font-size:12px;color:#111;font-family:'Liberation Serif',serif">试验脉冲数<span style="font-family:'Liberation Serif',serif;font-size:10.5px;margin-left:3px"></span></div>
<div class="a" style="left:746px;top:431.8px;width:97px;height:26px;background:#3a6ca6"></div>
<div class="t" style="left:748px;top:433.2px;font-size:24.4px;color:#dfeaf6;-webkit-text-stroke:0;font-family:'Liberation Serif',serif;transform:scaleX(0.845);transform-origin:0 0">13</div>
<div class="t" style="left:745px;top:462.5px;font-size:12px;color:#111;font-family:'Liberation Serif',serif">剩余脉冲数<span style="font-family:'Liberation Serif',serif;font-size:10.5px;margin-left:3px"></span></div>
<div class="a" style="left:746px;top:477.3px;width:97px;height:26px;background:#3a6ca6"></div>
<div class="t" style="left:748px;top:478.7px;font-size:24.4px;color:#dfeaf6;-webkit-text-stroke:0;font-family:'Liberation Serif',serif;transform:scaleX(0.845);transform-origin:0 0">97</div>
<div class="a" style="left:740px;top:510px;width:106px;height:56px;background:#f0f0f0;border-top:2px solid #8a8a8a;border-left:2px solid #8a8a8a;border-right:1px solid #fff;border-bottom:1px solid #fff"></div><div class="a" style="left:834px;top:512px;width:11px;height:54px;background:#f4f4f4;border-left:1px solid #e0e0e0"></div>
<div class="t" style="left:741px;top:512px;width:92px;text-align:center;font-size:19px;color:#333;-webkit-text-stroke:0;line-height:23.5px;white-space:normal;font-family:'Liberation Serif',serif">典型冲击<br>试验</div>
<svg class="a" style="left:837px;top:516px;" width="6" height="3" viewBox="0 0 6 3"><path d="M0,3 L3.0,0 L6,3 Z" fill="#707070"/></svg>
<svg class="a" style="left:837px;top:560px;" width="6" height="3" viewBox="0 0 6 3"><path d="M0,0 L3.0,3 L6,0 Z" fill="#707070"/></svg>
<div class="a" style="left:90px;top:486px;width:647px;height:81px;background:#f0f0f0"></div>
<div class="a" style="left:90px;top:488px;width:647px;height:78px;background:#fff;border-top:2px solid #8a8a8a;border-left:1px solid #a0a0a0"></div>
<div class="t" style="left:608px;top:500.5px;font-size:9px;font-weight:bold;color:#000">限制参数</div>
<div class="a" style="left:95px;top:520px;width:630px;height:38px;border-top:1px solid #222;border-left:1px solid #222"></div>
<div class="a" style="left:95px;top:538px;width:630px;height:1px;background:#222"></div>
<div class="a" style="left:222px;top:520px;width:1px;height:38px;background:#222"></div>
<div class="a" style="left:349px;top:520px;width:1px;height:38px;background:#222"></div>
<div class="a" style="left:445px;top:520px;width:1px;height:38px;background:#222"></div>
<div class="a" style="left:565px;top:520px;width:1px;height:38px;background:#222"></div>
<div class="a" style="left:697px;top:520px;width:1px;height:38px;background:#222"></div>
<div class="t" style="left:95px;top:524.5px;width:127px;text-align:center;font-size:8px;color:#111">振动台最大正位移<span style="font-size:7.5px;letter-spacing:-0.4px">(mm)</span></div>
<div class="t" style="left:95px;top:543.5px;width:127px;text-align:center;font-size:9.5px;color:#111">25.5</div>
<div class="t" style="left:222px;top:524.5px;width:127px;text-align:center;font-size:8px;color:#111">振动台最大负位移<span style="font-size:7.5px;letter-spacing:-0.4px">(mm)</span></div>
<div class="t" style="left:222px;top:543.5px;width:127px;text-align:center;font-size:9.5px;color:#111">-25.5</div>
<div class="t" style="left:349px;top:524.5px;width:96px;text-align:center;font-size:8px;color:#111">最大速度<span style="font-size:7.5px;letter-spacing:-0.4px">(m/s)</span></div>
<div class="t" style="left:349px;top:543.5px;width:96px;text-align:center;font-size:9.5px;color:#111">3</div>
<div class="t" style="left:445px;top:524.5px;width:120px;text-align:center;font-size:8px;color:#111">振动台最大加速度<span style="font-size:7.5px;letter-spacing:-0.4px">(g)</span></div>
<div class="t" style="left:445px;top:543.5px;width:120px;text-align:center;font-size:9.5px;color:#111">50</div>
<div class="t" style="left:565px;top:524.5px;width:132px;text-align:center;font-size:8px;color:#111">振动台最小驱动频率<span style="font-size:7.5px;letter-spacing:-0.4px">(Hz)</span></div>
<div class="t" style="left:565px;top:543.5px;width:132px;text-align:center;font-size:9.5px;color:#111">5</div>
<div class="t" style="left:697px;top:524.5px;width:63px;text-align:center;font-size:8px;color:#111"><span style="font-size:7.5px;letter-spacing:-0.4px"></span></div>
<div class="t" style="left:697px;top:543.5px;width:63px;text-align:center;font-size:9.5px;color:#111"></div>
<div class="t" style="left:719px;top:524.5px;font-size:8px;color:#111">振</div>
<div class="a" style="left:724px;top:489px;width:13px;height:63px;background:#f0f0f0"></div>
<svg class="a" style="left:727px;top:495px;" width="6" height="3.5" viewBox="0 0 6 3.5"><path d="M0,3.5 L3.0,0 L6,3.5 Z" fill="#404040"/></svg>
<div class="a" style="left:725px;top:504px;width:11px;height:13px;border:1px solid #a8a8a8;border-radius:2px;background:linear-gradient(90deg,#f8f8f8,#dcdcdc)"></div>
<svg class="a" style="left:727px;top:507px;" width="7" height="7" viewBox="0 0 7 7"><path d="M1,1.5 H6 M1,3.5 H6 M1,5.5 H6" stroke="#808080" stroke-width="0.9"/></svg>
<svg class="a" style="left:727px;top:541px;" width="6" height="3.5" viewBox="0 0 6 3.5"><path d="M0,0 L3.0,3.5 L6,0 Z" fill="#404040"/></svg>
<div class="a" style="left:91px;top:551px;width:646px;height:15px;background:#f0f0f0"></div>
<svg class="a" style="left:95px;top:556px;" width="4" height="6" viewBox="0 0 4 6"><path d="M4,0 L0,3.0 L4,6 Z" fill="#404040"/></svg>
<div class="a" style="left:105px;top:553px;width:356px;height:12px;border:1px solid #a8a8a8;border-radius:2px;background:linear-gradient(#f8f8f8,#dcdcdc)"></div>
<div class="a" style="left:281px;top:556px;width:5px;height:5px;border-left:1px solid #888;border-right:1px solid #888"></div><div class="a" style="left:283px;top:556px;width:1px;height:5px;background:#888"></div>
<svg class="a" style="left:715px;top:556px;" width="4" height="6" viewBox="0 0 4 6"><path d="M0,0 L4,3.0 L0,6 Z" fill="#404040"/></svg>
<div class="a" style="left:0;top:566px;width:850px;height:18px;background:#f0f0f0;border-top:1px solid #d8d8d8"></div>
<div class="t" style="left:1px;top:571.5px;font-size:10px;color:#111;transform:scaleX(0.94);transform-origin:0 0">帮助请按F1</div>
<div class="a" style="left:577px;top:570px;width:45px;height:14px;border:1px solid #c0c0c0;border-right-color:#fff;border-bottom:none"></div>
<div class="t" style="left:580px;top:572px;font-size:10px;color:#111">运行状态</div>
<div class="a" style="left:623px;top:570px;width:200px;height:14px;border:1px solid #c0c0c0;border-bottom:none"></div>
<div class="t" style="left:625px;top:572px;font-size:10px;color:#111;transform:scaleX(0.953);transform-origin:0 0">正在执行第1个计划表的第3项</div>
<div class="a" style="left:824px;top:570px;width:12px;height:14px;border:1px solid #c0c0c0;border-bottom:none"></div>
<div class="a" style="left:838px;top:570px;width:12px;height:14px;border:1px solid #c0c0c0;border-bottom:none"></div>
<div class="a" style="left:0;top:582px;width:850px;height:1px;background:#9a9a9a"></div><div class="a" style="left:0;top:583px;width:850px;height:1px;background:#505050"></div></body></html>
